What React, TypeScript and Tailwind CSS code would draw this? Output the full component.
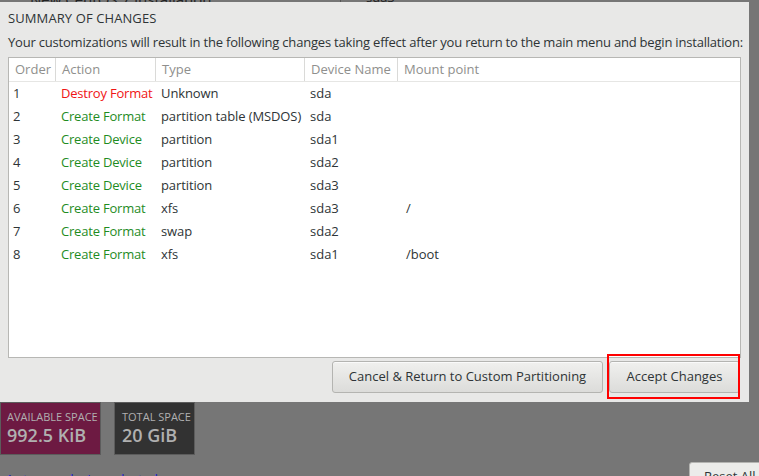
import React from 'react';

const ROWS = [
  { order: 1, action: 'Destroy Format', destroy: true, type: 'Unknown', device: 'sda', mount: '' },
  { order: 2, action: 'Create Format', type: 'partition table (MSDOS)', device: 'sda', mount: '' },
  { order: 3, action: 'Create Device', type: 'partition', device: 'sda1', mount: '' },
  { order: 4, action: 'Create Device', type: 'partition', device: 'sda2', mount: '' },
  { order: 5, action: 'Create Device', type: 'partition', device: 'sda3', mount: '' },
  { order: 6, action: 'Create Format', type: 'xfs', device: 'sda3', mount: '/' },
  { order: 7, action: 'Create Format', type: 'swap', device: 'sda2', mount: '' },
  { order: 8, action: 'Create Format', type: 'xfs', device: 'sda1', mount: '/boot' },
];

function HeaderCell({ label, className }: { label: string; className: string }) {
  return (
    <div className={`h-full flex items-center pl-[6px] border-r border-[#dadad8] ${className}`}>
      {label}
    </div>
  );
}

function SummaryTable() {
  return (
    <div className="mt-[6px] h-[301px] bg-white border border-[#b7b7b4] flex flex-col">
      <div className="h-[24px] flex text-[#8f8f8d] border-b border-[#e6e6e4] shrink-0">
        <HeaderCell label="Order" className="w-[47px]" />
        <HeaderCell label="Action" className="w-[100px]" />
        <HeaderCell label="Type" className="w-[149px]" />
        <HeaderCell label="Device Name" className="w-[93px]" />
        <div className="h-full flex items-center pl-[6px] flex-1">Mount point</div>
      </div>
      <div>
        {ROWS.map(r => (
          <div key={r.order} className="h-[23px] flex items-center text-[#2e3436] whitespace-nowrap">
            <span className="w-[52px] pl-[4px]">{r.order}</span>
            <span className={`w-[100px] tracking-[-0.2px] ${r.destroy ? 'text-[#f01414]' : 'text-[#1f8c1f]'}`}>{r.action}</span>
            <span className="w-[149px] tracking-[-0.1px]">{r.type}</span>
            <span className="w-[96px]">{r.device}</span>
            <span>{r.mount}</span>
          </div>
        ))}
      </div>
    </div>
  );
}

function DialogButton({ label, className }: { label: string; className: string }) {
  return (
    <button
      className={`h-[32px] rounded-[3px] border border-[#b4b4b1] bg-gradient-to-b from-[#f0f0ee] to-[#dcdcda] text-[#2e3436] shadow-[inset_0_1px_0_#fafafa] ${className}`}
    >
      {label}
    </button>
  );
}

export default function App() {
  return (
    <div
      className="w-[759px] h-[476px] bg-[#767676] overflow-hidden relative text-[13px]"
      style={{ fontFamily: '"Open Sans", "DejaVu Sans", sans-serif' }}
    >
      {/* strip of the page behind the dialog */}
      <div className="h-[2px] overflow-hidden flex">
        <div className="w-[341px] border-r border-[#555] text-[#222] -mt-[12px] pl-[30px] text-[15px]">New CentOS 7 Installation</div>
        <div className="pl-[25px] text-[#222] -mt-[12px]">sda3</div>
      </div>

      {/* summary dialog */}
      <div className="w-[749px] h-[400px] bg-[#e8e8e7] px-[8px] pt-[7px] flex flex-col">
        <div className="h-[18px] leading-[18px] text-[#2e3436] font-medium tracking-[0.1px]">SUMMARY OF CHANGES</div>
        <div className="mt-[6px] h-[18px] leading-[18px] text-[#2e3436] whitespace-nowrap tracking-[-0.2px]">
          Your customizations will result in the following changes taking effect after you return to the main menu and begin installation:
        </div>
        <SummaryTable />
        <div className="mt-[3px] flex justify-end gap-[6px] pr-[1px]">
          <DialogButton label="Cancel & Return to Custom Partitioning" className="w-[271px]" />
          <DialogButton label="Accept Changes" className="w-[131px]" />
        </div>
      </div>

      {/* highlight annotation */}
      <div className="absolute left-[607px] top-[354px] w-[133px] h-[45px] border-2 border-[#ff0000]" />

      {/* space summary below */}
      <div className="flex gap-[13px] text-[#b0b0b0]">
        <div className="w-[101px] h-[53px] bg-[#6d1a42] border border-[#5c5c5c] pl-[6px] pt-[8px]">
          <div className="text-[11px] leading-[12px]">AVAILABLE SPACE</div>
          <div className="text-[18px] font-semibold leading-[24px]">992.5 KiB</div>
        </div>
        <div className="w-[81px] h-[53px] bg-[#323232] border border-[#5c5c5c] pl-[7px] pt-[8px]">
          <div className="text-[11px] leading-[12px]">TOTAL SPACE</div>
          <div className="text-[18px] font-semibold leading-[24px]">20 GiB</div>
        </div>
      </div>
      <div className="flex mt-[7px]">
        <div className="pl-[6px] pt-[8px] text-[#1a1ad2] underline">1 storage device selected</div>
        <div className="ml-auto mr-[-20px] w-[90px] h-[30px] rounded-[3px] border border-[#b4b4b1] bg-[#ececea] pl-[14px] pt-[4px] text-[#2e3436]">Reset All</div>
      </div>
    </div>
  );
}
